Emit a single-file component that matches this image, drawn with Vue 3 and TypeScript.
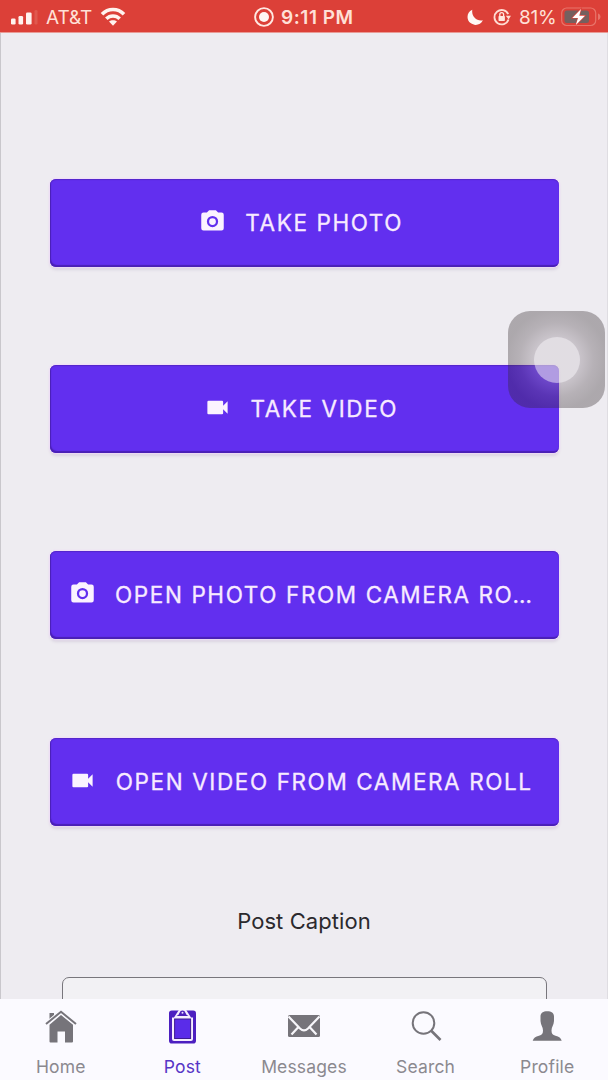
<script setup lang="ts">
type ButtonIcon = 'camera' | 'video'
const actions: { label: string; icon: ButtonIcon; key: string }[] = [
  { label: 'TAKE PHOTO', icon: 'camera', key: 'take-photo' },
  { label: 'TAKE VIDEO', icon: 'video', key: 'take-video' },
  { label: 'OPEN PHOTO FROM CAMERA RO…', icon: 'camera', key: 'open-photo' },
  { label: 'OPEN VIDEO FROM CAMERA ROLL', icon: 'video', key: 'open-video' },
]
const iconPaths: Record<ButtonIcon, string> = {
  camera:
    'M4 4H7L9 2H15L17 4H20A2 2 0 0 1 22 6V18A2 2 0 0 1 20 20H4A2 2 0 0 1 2 18V6A2 2 0 0 1 4 4M12 7A5 5 0 0 0 7 12A5 5 0 0 0 12 17A5 5 0 0 0 17 12A5 5 0 0 0 12 7M12 9A3 3 0 0 1 15 12A3 3 0 0 1 12 15A3 3 0 0 1 9 12A3 3 0 0 1 12 9Z',
  video:
    'M17 10.5V7A1 1 0 0 0 16 6H4A1 1 0 0 0 3 7V17A1 1 0 0 0 4 18H16A1 1 0 0 0 17 17V13.5L21 17.5V6.5L17 10.5Z',
}
const tabs = ['Home', 'Post', 'Messages', 'Search', 'Profile']
const activeTab = 'Post'
</script>

<template>
  <div class="phone">
    <header class="status">
      <div class="side left">
        <svg class="signal" width="28" height="18" viewBox="0 0 28 18">
          <rect x="0" y="10.500" width="4.6" height="6" rx="1.3" fill="#fff3ef" />
          <rect x="7.500" y="8" width="4.600" height="8.500" rx="1.3" fill="#fff3ef" />
          <rect x="15" y="4.500" width="5.600" height="12" rx="1.3" fill="#fff3ef" />
          <rect x="23.500" y="2" width="3" height="14.500" rx="1.3" fill="#e0584e" />
        </svg>
        <span class="carrier">AT&amp;T</span>
        <svg class="wifi" width="26" height="20" viewBox="0 0 26 20">
          <g fill="none" stroke="#fff3ef" stroke-width="3.500">
            <path d="M2 7.300C8 .9 18 .9 24 7.300" />
            <path d="M6.300 11.800C10 8 16 8 19.700 11.800" />
          </g>
          <path d="M9 14.600C11.300 12.700 14.700 12.700 17 14.600L13 18.700Z" fill="#fff3ef" />
        </svg>
      </div>
      <div class="clock">
        <svg width="20" height="20" viewBox="0 0 20 20">
          <circle cx="10" cy="10" r="8.900" fill="none" stroke="#ffe9e2" stroke-width="1.900" />
          <circle cx="10" cy="10" r="5" fill="#fff6f2" />
        </svg>
        <span>9:11 PM</span>
      </div>
      <div class="side right">
        <svg class="moon" width="17" height="17" viewBox="0 0 17 17">
          <path d="M5.300 .8C-.8 3.500-.7 11 3.600 14.100C8 17.500 13.800 15.800 15.900 11.200C9.500 12.400 4.200 7.500 5.300 .8Z" fill="#fff8f5" />
        </svg>
        <svg class="lock" width="18" height="18" viewBox="0 0 18 18">
          <path d="M15.200 6.200A7.200 7.200 0 1 0 15.500 11.500" fill="none" stroke="#ffdcd3" stroke-width="1.800" />
          <path d="M12.800 7.800H18L15.600 11.500Z" fill="#ffdcd3" />
          <rect x="5.500" y="8" width="6.400" height="5" rx=".7" fill="#ffe7df" />
          <path d="M6.800 8V6.500A1.900 1.900 0 0 1 10.600 6.500V8" fill="none" stroke="#ffe7df" stroke-width="1.300" />
        </svg>
        <span class="percent">81%</span>
        <svg class="battery" width="40" height="20" viewBox="0 0 40 20">
          <rect x=".7" y="1" width="34" height="17.500" rx="5" fill="none" stroke="#e8746a" stroke-width="1.200" />
          <rect x="3.500" y="3.500" width="24.500" height="12.500" rx="2.500" fill="#75605f" />
          <path d="M37 6.500C40.300 7.500 40.300 12 37 13Z" fill="#e8746a" />
          <path d="M20 2L11.300 11H17L14.800 18L24 8.700H18.300Z" fill="#fff" stroke="#db4239" stroke-width="1.200" paint-order="stroke" />
        </svg>
      </div>
    </header>

    <main class="content">
      <button v-for="action in actions" :key="action.key" class="action" type="button">
        <svg class="action-icon" viewBox="0 0 24 24"><path :d="iconPaths[action.icon]" fill-rule="evenodd" /></svg>
        <span class="label">{{ action.label }}</span>
      </button>
      <p class="caption">Post Caption</p>
      <div class="field"></div>
    </main>

    <nav class="tabs">
      <div v-for="tab in tabs" :key="tab" :class="['tab', { active: tab === activeTab }]">
        <svg class="tab-icon" width="36" height="38" viewBox="0 0 36 38">
          <g v-if="tab === 'Home'">
            <path d="M6.500 6H11V10L6.500 14Z" fill="currentColor" />
            <path d="M6.500 17.700L18 8L30 17.700V34.500Q30 35.500 29 35.500H22V24.500H14.500V35.500H7.500Q6.500 35.500 6.500 34.500Z" fill="currentColor" />
            <path d="M3 17L18 4.800L33 17" fill="none" stroke="#fbfaff" stroke-width="4" />
            <path d="M3 17L18 4.800L33 17" fill="none" stroke="currentColor" stroke-width="2" />
          </g>
          <g v-else-if="tab === 'Post'">
            <rect x="5" y="3.500" width="27" height="33" rx="2.800" fill="#4c1fc0" />
            <path d="M8 10.500H10L14.800 3H22.200L27 10.500H29V32Q29 34 27 34H10Q8 34 8 32Z" fill="#f5edff" />
            <rect x="10.600" y="12" width="16" height="19.500" fill="#5a2ce9" stroke="#3d1b91" stroke-width="1" />
            <path d="M12.500 9Q15 8 15.600 5.800A3 3 0 0 1 21.400 5.800Q22 8 24.500 9Z" fill="#4d20ba" />
            <circle cx="18.500" cy="5.800" r="1" fill="#eee4ff" />
          </g>
          <g v-else-if="tab === 'Messages'">
            <rect x="2" y="8" width="32" height="22" rx="1.500" fill="currentColor" />
            <path d="M2.500 9.500L14 21.500Q18 25.200 22 21.500L33.500 9.500M5.500 27.500L12 20.500M30.500 27.500L24 20.500" fill="none" stroke="#f7f6fa" stroke-width="2.200" />
          </g>
          <g v-else-if="tab === 'Search'" fill="none" stroke="currentColor">
            <circle cx="15.500" cy="16" r="10.800" stroke-width="2" />
            <path d="M23 23.500L32.500 33" stroke-width="2.600" />
          </g>
          <path v-else d="M11.500 10C11.300 5.800 14 4.200 18.200 4.200C22.500 4.200 25.200 6 25 10V14C24.800 18 22.500 20 22.500 23.500C22.500 26.500 23.500 27.800 26.500 28.800C30 29.800 32 31 32.700 33.800H3.700C4.500 31 6.500 29.800 10 28.800C13 27.800 14 26.500 14 23.500C14 20 11.700 18 11.500 14Z" fill="currentColor" />
        </svg>
        <span class="tab-label">{{ tab }}</span>
      </div>
    </nav>

    <div class="assistive"><div class="knob"></div></div>
  </div>
</template>

<style>
body { margin: 0; }
</style>

<style scoped>
.phone {
  position: relative;
  box-sizing: border-box;
  width: 608px;
  height: 1080px;
  overflow: hidden;
  display: flex;
  flex-direction: column;
  background: #eeecf1;
  font-family: Inter, "Liberation Sans", sans-serif;
}
.status {
  box-sizing: border-box;
  height: 33px;
  flex: none;
  display: grid;
  grid-template-columns: 1fr auto 1fr;
  align-items: center;
  background: #dc4038;
  border-bottom: 1px solid #e99b96;
  color: #ffe0d7;
  font-size: 19px;
  line-height: 32px;
}
.side { display: flex; align-items: center; height: 32px; }
.left { padding-left: 11px; }
.carrier { margin-left: 7px; letter-spacing: -0.1px; font-size: 19px; width: 48px; padding-top: 2px; }
.wifi { margin-left: 6px; }
.clock { display: flex; align-items: center; gap: 7px; font-weight: 600; font-size: 19px; letter-spacing: 0.55px; }
.clock span { width: 73px; white-space: nowrap; padding-top: 2px; }
.right { justify-content: flex-end; padding-right: 7px; }
.moon { margin-right: 9px; }
.lock { margin-right: 8px; }
.percent { width: 38px; letter-spacing: -0.3px; padding-top: 2px; margin-right: 4px; white-space: nowrap; }
.content {
  flex: 1;
  min-height: 0;
  overflow: hidden;
  display: flex;
  flex-direction: column;
  padding: 146px 48px 0 49px;
  border-left: 1px solid #c9c7cc;
  border-right: 1px solid #dfdde2;
}
.action {
  box-sizing: border-box;
  flex: none;
  height: 88px;
  margin: 0 0 98.200px;
  padding: 0 7px 1px 0;
  border: 0;
  border-radius: 6px;
  display: flex;
  align-items: center;
  justify-content: center;
  background: #622fef;
  color: #f7eaff;
  font: 400 22.500px/30px Inter, "Liberation Sans", sans-serif;
  box-shadow: inset 1px -2px 1px #4a20b5, inset 0 1px 1px #5426c9, 0 0 2px 1px #f0dcf8, 0 3px 3px #d8d3df;
}
.action-icon { width: 27px; height: 27px; flex: none; margin-right: 19.500px; margin-top: -2px; fill: #fbf3ff; }
.label { white-space: nowrap; letter-spacing: 1.600px; padding-top: 1px; -webkit-text-stroke: 0.300px #f7eaff; }
.caption { margin: -21px 1px 0 0; text-align: center; color: #2b292d; font-size: 22px; line-height: 36px; letter-spacing: 0.08px; }
.field {
  box-sizing: border-box;
  height: 100px;
  flex: none;
  margin: 38px 12px 0 12px;
  border: 1.500px solid #78767c;
  border-radius: 7px;
  background: #f2f1f4;
}
.tabs { flex: none; height: 81px; display: grid; grid-template-columns: repeat(5, 1fr); background: #fbfaff; }
.tab { display: flex; flex-direction: column; align-items: center; color: #76747a; }
.tab-icon { margin-top: 8px; }
.tab-label { font-size: 17.500px; line-height: 24px; margin-top: 10px; color: #8b898f; letter-spacing: 0.150px; }
.active .tab-label { color: #5635c6; }
.assistive {
  position: absolute;
  left: 508px;
  top: 311px;
  width: 97px;
  height: 97px;
  border-radius: 22px;
  display: flex;
  align-items: center;
  justify-content: center;
  background: radial-gradient(circle at 50% 50%, rgba(130, 118, 128, .34) 0 23px, rgba(75, 64, 70, .34) 37px, rgba(46, 37, 40, .34) 50px);
}
.knob { width: 46px; height: 46px; border-radius: 50%; background: rgba(250, 248, 252, .48); }
</style>
